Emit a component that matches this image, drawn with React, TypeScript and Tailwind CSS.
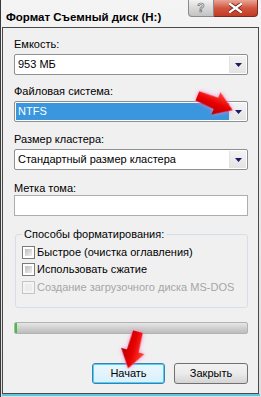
import React from 'react';

const font = { fontFamily: '"Liberation Sans", Arial, sans-serif' };

const DropArrow = () => (
  <div className="flex h-full w-[17px] items-center justify-center border-l border-[#e3e3e3] bg-gradient-to-b from-[#f3f3f3] to-[#e4e4e4]">
    <svg width="7" height="4" viewBox="0 0 7 4">
      <path d="M0 0h7L3.5 4z" fill="#1c1c64" />
    </svg>
  </div>
);

const Combo = ({ value, selected }: { value: string; selected?: boolean }) => (
  <div className="flex h-[21px] items-stretch rounded-[2px] border border-[#8e8f8f] bg-white p-[1px]">
    <div className={`flex flex-1 items-center pl-[2px] ${selected ? 'bg-[#3a96dd] text-white' : 'text-black'}`}>
      {value}
    </div>
    <DropArrow />
  </div>
);

const Check = ({ label, disabled }: { label: string; disabled?: boolean }) => (
  <div className="flex h-[13px] items-center gap-[2px]">
    <div className={`h-[13px] w-[13px] border p-[2px] ${disabled ? 'border-[#c5c5c5] bg-[#f4f4f4]' : 'border-[#7a7a7a] bg-white'}`}>
      <div className={`h-full w-full ${disabled ? 'bg-[#ececec]' : 'bg-gradient-to-br from-[#bdbdbd] to-[#f0f0f0]'}`} />
    </div>
    <span className={disabled ? 'text-[#a6a6a6]' : 'text-black'}>{label}</span>
  </div>
);

const RedArrow = ({ className }: { className: string }) => (
  <svg className={className} width="40" height="26" viewBox="0 0 40 26" style={{ filter: 'drop-shadow(0 0 2px #ff7fd0)' }}>
    <defs>
      <linearGradient id="rg" x1="0" y1="0" x2="0" y2="1">
        <stop offset="0" stopColor="#ff4a3a" />
        <stop offset="0.5" stopColor="#e80000" />
        <stop offset="1" stopColor="#b00000" />
      </linearGradient>
    </defs>
    <path d="M1 8 L21 7 L21 1 L39 13 L21 25 L21 19 L1 18 Z" fill="url(#rg)" />
  </svg>
);

export default function App() {
  return (
    <div className="relative h-[397px] w-[261px] overflow-hidden bg-white text-[11px]" style={font}>
      {/* frame */}
      <div className="flex h-full w-full flex-col border-l border-[#3a3a3a] bg-gradient-to-b from-[#f4f4f4] to-[#dedede]">
        {/* title bar */}
        <div className="flex h-[27px] items-start">
          <div className="mt-[9px] pl-[5px] text-[11.5px] font-bold text-black">Формат Съемный диск (H:)</div>
          <div className="ml-auto mr-[3px] flex">
            <div className="flex h-[17px] w-[26px] items-center justify-center rounded-bl-[4px] border border-t-0 border-[#8a8a8a] bg-gradient-to-b from-[#f2f2f2] via-[#d8d8d8] to-[#c3c3c3] text-[12px] font-bold text-white" style={{ WebkitTextStroke: '0.6px #555' }}>
              ?
            </div>
            <div className="flex h-[17px] w-[44px] items-center justify-center rounded-br-[4px] border border-l-0 border-t-0 border-[#7a2a20] bg-gradient-to-b from-[#e8a597] via-[#d2553f] to-[#c23a24]">
              <svg width="13" height="10" viewBox="0 0 13 10">
                <path d="M1 1L12 9M12 1L1 9" stroke="#6b2318" strokeWidth="4" strokeLinecap="square" />
                <path d="M1 1L12 9M12 1L1 9" stroke="#fff" strokeWidth="2.2" strokeLinecap="square" />
              </svg>
            </div>
          </div>
        </div>

        {/* client */}
        <div className="ml-[1px] flex h-[367px] w-[257px] flex-col border border-[#4a4a4a] bg-[#f0f0f0] pl-[11px] pr-[10px] pt-[9px] text-black">
          <div className="h-[14px] leading-[14px]">Емкость:</div>
          <div className="mt-[3px]"><Combo value="953 МБ" /></div>

          <div className="mt-[9px] h-[14px] leading-[14px]">Файловая система:</div>
          <div className="mt-[3px]"><Combo value="NTFS" selected /></div>

          <div className="mt-[10px] h-[14px] leading-[14px]">Размер кластера:</div>
          <div className="mt-[3px]"><Combo value="Стандартный размер кластера" /></div>

          <div className="mt-[11px] h-[14px] leading-[14px]">Метка тома:</div>
          <div className="mt-[0px] h-[21px] border border-[#abadb3] bg-white" />

          <fieldset className="ml-[1px] mt-[12px] h-[80px] rounded-[3px] border border-[#d5dfe5] pl-[6px] pt-[5px]">
            <legend className="px-[2px] leading-[13px]">Способы форматирования:</legend>
            <div className="flex flex-col gap-[4px]">
              <Check label="Быстрое (очистка оглавления)" />
              <Check label="Использовать сжатие" />
              <div className="mt-[1px]"><Check label="Создание загрузочного диска MS-DOS" disabled /></div>
            </div>
          </fieldset>

          <div className="mt-[14px] h-[12px] overflow-hidden rounded-[2px] border border-[#b2b2b2] bg-gradient-to-b from-[#e6e6e6] via-[#d0d0d0] to-[#bdbdbd]">
            <div className="h-full w-[2px] bg-[#3cc43c]" />
          </div>

          <div className="mt-[29px] flex justify-end gap-[9px]">
            <div className="flex h-[21px] w-[73px] items-center justify-center rounded-[3px] border border-[#3c7fb1] bg-gradient-to-b from-[#eaf6fd] to-[#d9f0fc] shadow-[inset_0_0_0_1px_#48d2f4]">
              Начать
            </div>
            <div className="flex h-[21px] w-[74px] items-center justify-center rounded-[3px] border border-[#707070] bg-gradient-to-b from-[#f2f2f2] via-[#ebebeb] to-[#d4d4d4]">
              Закрыть
            </div>
          </div>
        </div>
        <div className="ml-[1px] h-[2px] w-[258px] bg-[#5ec7e0]" />
      </div>

      {/* annotation arrows */}
      <RedArrow className="absolute left-[195px] top-[90px] rotate-[22deg]" />
      <RedArrow className="absolute left-[113px] top-[337px] rotate-[105deg]" />
    </div>
  );
}
